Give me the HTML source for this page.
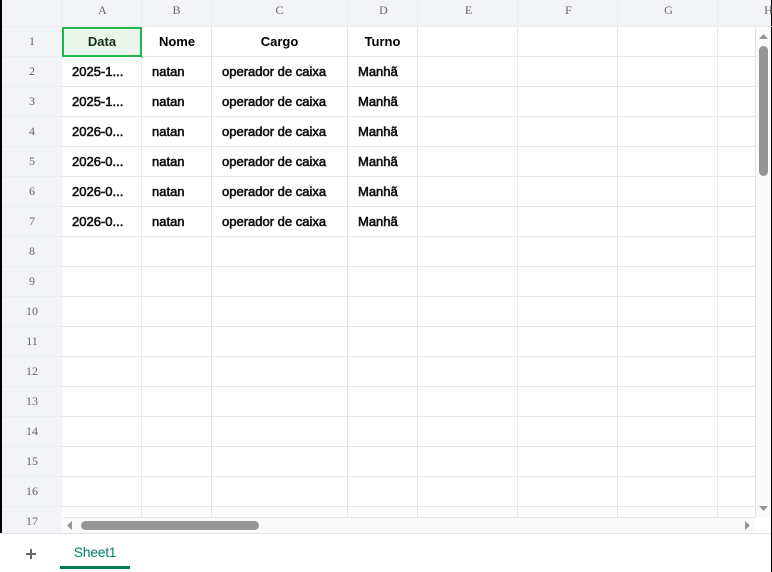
<!DOCTYPE html>
<html><head><meta charset="utf-8"><style>
html,body{margin:0;padding:0;width:772px;height:572px;overflow:hidden;background:#fff}
#r{position:relative;width:772px;height:572px;overflow:hidden;font-family:"Liberation Sans",sans-serif}
#r div{position:absolute;white-space:nowrap}
.h{top:0;height:26px;text-align:center;font:12px/21px "Liberation Serif",serif;color:#666}
.n{left:2px;width:60px;height:30px;text-align:center;font:12px/30px "Liberation Serif",serif;color:#666}
.v{width:1px;top:27px;height:506px;background:#e6e6e6}
.hv{width:1px;top:0;height:26px;background:#ebedf1}
.l{height:1px;left:62px;width:694px;background:#e6e6e6}
.g{height:1px;left:2px;width:60px;background:#ebedf1}
.t{font-weight:normal;font-size:13px;line-height:18px;color:#111;-webkit-text-stroke:.6px #111}
.b{font-weight:bold;font-size:13px;line-height:18px;color:#000;text-align:center}
</style></head><body><div id="r">
<div style="left:2px;top:0;width:770px;height:26px;background:#f3f4f8"></div>
<div style="left:2px;top:26px;width:60px;height:507px;background:#f3f4f8"></div>
<div style="left:0;top:0;width:2px;height:533px;background:#000"></div>
<div style="left:771px;top:0;width:1px;height:572px;background:#000"></div>

<div class="hv" style="left:61px"></div><div class="hv" style="left:141px"></div><div class="hv" style="left:211px"></div><div class="hv" style="left:347px"></div><div class="hv" style="left:417px"></div><div class="hv" style="left:517px"></div><div class="hv" style="left:617px"></div><div class="hv" style="left:717px"></div>
<div class="h" style="left:63px;width:79px">A</div><div class="h" style="left:142px;width:69px">B</div><div class="h" style="left:212px;width:135px">C</div><div class="h" style="left:349px;width:69px">D</div><div class="h" style="left:419px;width:99px">E</div><div class="h" style="left:519px;width:99px">F</div><div class="h" style="left:619px;width:99px">G</div><div class="h" style="left:719px;width:99px">H</div>

<div class="v" style="left:141px"></div><div class="v" style="left:211px"></div><div class="v" style="left:347px"></div><div class="v" style="left:417px"></div><div class="v" style="left:517px"></div><div class="v" style="left:617px"></div><div class="v" style="left:717px"></div>

<div class="g" style="top:26px;width:770px"></div>
<div class="g" style="top:56px"></div><div class="g" style="top:86px"></div><div class="g" style="top:116px"></div><div class="g" style="top:146px"></div><div class="g" style="top:176px"></div><div class="g" style="top:206px"></div><div class="g" style="top:236px"></div><div class="g" style="top:266px"></div><div class="g" style="top:296px"></div><div class="g" style="top:326px"></div><div class="g" style="top:356px"></div><div class="g" style="top:386px"></div><div class="g" style="top:416px"></div><div class="g" style="top:446px"></div><div class="g" style="top:476px"></div><div class="g" style="top:506px"></div>

<div class="l" style="top:56px"></div><div class="l" style="top:86px"></div><div class="l" style="top:116px"></div><div class="l" style="top:146px"></div><div class="l" style="top:176px"></div><div class="l" style="top:206px"></div><div class="l" style="top:236px"></div><div class="l" style="top:266px"></div><div class="l" style="top:296px"></div><div class="l" style="top:326px"></div><div class="l" style="top:356px"></div><div class="l" style="top:386px"></div><div class="l" style="top:416px"></div><div class="l" style="top:446px"></div><div class="l" style="top:476px"></div><div class="l" style="top:506px"></div>

<div class="n" style="top:26px">1</div><div class="n" style="top:56px">2</div><div class="n" style="top:86px">3</div><div class="n" style="top:116px">4</div><div class="n" style="top:146px">5</div><div class="n" style="top:176px">6</div><div class="n" style="top:206px">7</div><div class="n" style="top:236px">8</div><div class="n" style="top:266px">9</div><div class="n" style="top:296px">10</div><div class="n" style="top:326px">11</div><div class="n" style="top:356px">12</div><div class="n" style="top:386px">13</div><div class="n" style="top:416px">14</div><div class="n" style="top:446px">15</div><div class="n" style="top:476px">16</div><div class="n" style="top:506px">17</div>

<div style="left:62px;top:27px;width:76px;height:26px;background:#e8f6ec;border:2px solid #21b64c"></div>
<div style="left:142px;top:57px;width:1px;height:1px;background:#21b64c"></div>
<div class="b" style="left:62px;top:33px;width:80px;color:#12301c">Data</div>
<div class="b" style="left:142px;top:33px;width:70px">Nome</div>
<div class="b" style="left:212px;top:33px;width:135px">Cargo</div>
<div class="b" style="left:348px;top:33px;width:69px">Turno</div>

<div class="t" style="left:72px;top:63px">2025-1...</div><div class="t" style="left:152px;top:63px">natan</div><div class="t" style="left:222px;top:63px">operador de caixa</div><div class="t" style="left:358px;top:63px">Manhã</div>
<div class="t" style="left:72px;top:93px">2025-1...</div><div class="t" style="left:152px;top:93px">natan</div><div class="t" style="left:222px;top:93px">operador de caixa</div><div class="t" style="left:358px;top:93px">Manhã</div>
<div class="t" style="left:72px;top:123px">2026-0...</div><div class="t" style="left:152px;top:123px">natan</div><div class="t" style="left:222px;top:123px">operador de caixa</div><div class="t" style="left:358px;top:123px">Manhã</div>
<div class="t" style="left:72px;top:153px">2026-0...</div><div class="t" style="left:152px;top:153px">natan</div><div class="t" style="left:222px;top:153px">operador de caixa</div><div class="t" style="left:358px;top:153px">Manhã</div>
<div class="t" style="left:72px;top:183px">2026-0...</div><div class="t" style="left:152px;top:183px">natan</div><div class="t" style="left:222px;top:183px">operador de caixa</div><div class="t" style="left:358px;top:183px">Manhã</div>
<div class="t" style="left:72px;top:213px">2026-0...</div><div class="t" style="left:152px;top:213px">natan</div><div class="t" style="left:222px;top:213px">operador de caixa</div><div class="t" style="left:358px;top:213px">Manhã</div>

<!-- vertical scrollbar -->
<div style="left:755px;top:28px;width:16px;height:489px;background:#fafafa;border-left:1px solid #e3e3e3;box-sizing:border-box"></div>
<div style="left:759px;top:46px;width:9px;height:130px;background:#959595;border-radius:5px"></div>
<svg style="position:absolute;left:758px;top:33px" width="12" height="7"><path d="M1 6L5.5 1L10 6Z" fill="#959595"/></svg>
<svg style="position:absolute;left:758px;top:505px" width="12" height="7"><path d="M1 1L10 1L5.5 6Z" fill="#959595"/></svg>

<!-- horizontal scrollbar -->
<div style="left:63px;top:517px;width:692px;height:16px;background:#fafafa;border-top:1px solid #e3e3e3;box-sizing:border-box"></div>
<div style="left:81px;top:521px;width:178px;height:9px;background:#959595;border-radius:5px"></div>
<svg style="position:absolute;left:66px;top:520px" width="8" height="12"><path d="M6 1L6 10L1 5.5Z" fill="#959595"/></svg>
<svg style="position:absolute;left:744px;top:520px" width="8" height="12"><path d="M1 1L1 10L6 5.5Z" fill="#959595"/></svg>

<!-- footer -->
<div style="left:0;top:533px;width:771px;height:1px;background:#e3e3e3"></div>
<div style="left:26px;top:553px;width:10px;height:2px;background:#666"></div>
<div style="left:30px;top:549px;width:2px;height:10px;background:#666"></div>
<div style="left:60px;top:538px;width:70px;text-align:center;font-size:14px;line-height:28px;letter-spacing:-.3px;color:#00806a">Sheet1</div>
<div style="left:60px;top:566px;width:70px;height:3px;background:#007a55"></div>
</div></body></html>
